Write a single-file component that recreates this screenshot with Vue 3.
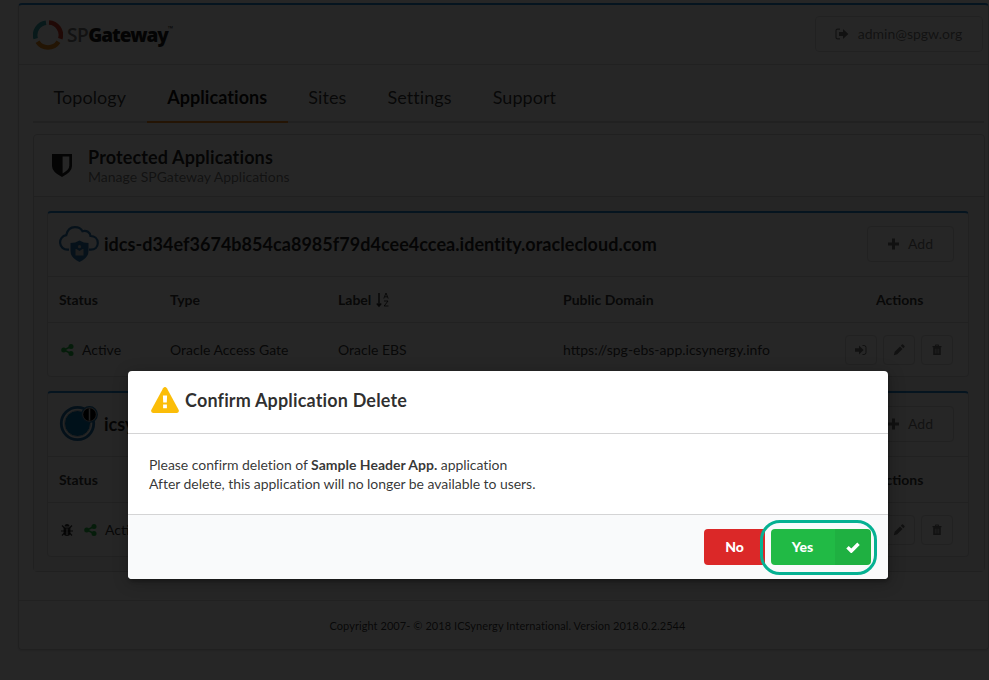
<script setup>
const tabs = ['Topology', 'Applications', 'Sites', 'Settings', 'Support']
const providers = [
  { kind: 'cloud', title: 'idcs-d34ef3674b854ca8985f79d4cee4ccea.identity.oraclecloud.com', debug: false, heads: ['Type', 'Label', 'Public Domain'], cells: ['Oracle Access Gate', 'Oracle EBS', 'https://spg-ebs-app.icsynergy.info'] },
  { kind: 'ring', title: 'icsy', debug: true, heads: ['', '', ''], cells: ['', '', ''] }
]
</script>

<template>
  <div class="page">
    <div class="shell">
      <header class="top">
        <div class="brand">
          <svg class="logo" width="30" height="30" viewBox="0 0 30 30" fill="none" stroke-width="4.600">
            <path d="M2.700 18.700A12.500 12.500 0 0 1 13 2.700" stroke="#35a6ad" />
            <path d="M16 2.500A12.500 12.500 0 0 1 27.300 18.700" stroke="#d8402a" />
            <path d="M4.500 21.800A12.500 12.500 0 0 0 25.500 21.800" stroke="#e78a1e" />
          </svg>
          <span class="wordmark"><span class="sp">SP</span><b>Gateway</b><span class="tm">™</span></span>
        </div>
        <button class="btn user">
          <svg width="14" height="12" viewBox="0 0 14 12"><path d="M5 1.200H2.600Q1 1.200 1 2.800v6.400q0 1.600 1.600 1.600H5" fill="none" stroke="currentColor" stroke-width="1.200" /><path d="M4 4h4V1l5.400 5L8 11V8H4z" fill="currentColor" /></svg>
          <span>admin@spgw.org</span>
        </button>
      </header>

      <nav class="tabs">
        <a v-for="t in tabs" :key="t" :class="['tab', { active: t === 'Applications' }]">{{ t }}</a>
      </nav>

      <section class="panel">
        <div class="panel-head">
          <svg class="shield" width="20" height="24" viewBox="0 0 20 24"><path d="M0 1h20v12q0 6-10 11Q0 19 0 13z" fill="#1b1c1d" /><path d="M10.600 3.600h6.700v9q0 4.300-6.700 8z" fill="#fff" /></svg>
          <div class="panel-text">
            <div class="panel-title">Protected Applications</div>
            <div class="panel-sub">Manage SPGateway Applications</div>
          </div>
        </div>
        <div class="panel-body">
          <article v-for="p in providers" :key="p.kind" class="card">
            <div class="card-head">
              <svg v-if="p.kind === 'cloud'" width="40" height="36" viewBox="0 0 40 36">
                <path d="M10 23.700H8.500A7.300 7.300 0 0 1 7.200 9.200C8.500 3 12 1.100 16 1.100c4 0 6.500 2.100 7.500 4.100 4-1.300 7.700 1.300 8 4.800 4 0 7.300 2.500 7.300 7.100 0 4-3 6.600-7 6.600H30" fill="none" stroke="#2874ac" stroke-width="2.200" />
                <path d="M20.500 14.500q4 2.500 9 2.500v8q0 7-9 11-9-4-9-11v-8q5 0 9-2.500z" fill="#2874ac" />
                <path d="M16.500 23h1l3 2 3-2h1v6.500h-8z" fill="#ccc" /><circle cx="20.500" cy="20.700" r="1.600" fill="#ccc" />
              </svg>
              <svg v-else width="40" height="36" viewBox="0 0 40 36" overflow="visible">
                <circle cx="18.500" cy="17.500" r="16.200" fill="none" stroke="#1b6fa8" stroke-width="2.800" />
                <circle cx="18.500" cy="17.500" r="13" fill="#0672ae" stroke="#ccc" stroke-width="1" />
                <circle cx="30.500" cy="8.500" r="7.800" fill="#bbb" stroke="#1b6fa8" stroke-width="1.200" />
                <circle cx="30.500" cy="8.500" r="6.300" fill="#000" /><path d="M30.500 2.500v12" stroke="#ddd" stroke-width="1.500" />
              </svg>
              <h2>{{ p.title }}</h2>
              <button class="btn add">
                <svg width="11" height="12" viewBox="0 0 11 12"><path d="M5.500 .5v11M0 6h11" stroke="currentColor" stroke-width="3" /></svg>
                <span>Add</span>
              </button>
            </div>
            <div class="row heads">
              <div>Status</div>
              <div v-for="(h, i) in p.heads" :key="i" class="sort">{{ h }}
                <svg v-if="h === 'Label'" width="14" height="16" viewBox="0 0 14 16" fill="none" stroke="currentColor"><path d="M3 1v12M.8 11.500L3 14l2.200-2.500" stroke-width="1.500" /><path d="M7.800 6.500L10 1l2.200 5.500M8.800 4.800h2.400M8 9h4l-3.800 5h4.300" stroke-width=".9" /></svg>
              </div>
              <div class="acts-title">Actions</div>
            </div>
            <div class="row data">
              <div class="status">
                <svg v-if="p.debug" class="bug" width="12" height="14" viewBox="0 0 12 14"><path d="M3.500 3.500a2.500 2.500 0 0 1 5 0z" fill="currentColor" /><path d="M2.600 4.500h6.800v5Q9.400 13 6 13t-3.400-3.500z" fill="currentColor" /><path d="M0 8h12M1 2.500L3.500 5M11 2.500L8.500 5M1 12.500L3.500 10M11 12.500L8.500 10" stroke="currentColor" stroke-width="1.200" /><path d="M6 5.500v6.500" stroke="#fff" /></svg>
                <svg class="share" width="13" height="12" viewBox="0 0 13 12"><path d="M10 2.500L3 6l7 3.500" fill="none" stroke="currentColor" stroke-width="1.500" /><circle cx="10" cy="2.500" r="2.500" fill="currentColor" /><circle cx="2.700" cy="6" r="2.500" fill="currentColor" /><circle cx="10" cy="9.500" r="2.500" fill="currentColor" /></svg>
                <span>Active</span>
              </div>
              <div v-for="(c, i) in p.cells" :key="i">{{ c }}</div>
              <div class="acts">
                <button class="btn sq"><svg width="12" height="12" viewBox="0 0 12 12"><path d="M7.500 1.500H9q2 0 2 2v5q0 2-2 2H7.500" fill="none" stroke="currentColor" /><path d="M0 4.300h4V1.500L8.600 6 4 10.500V7.700H0z" fill="currentColor" /></svg></button>
                <button class="btn sq"><svg width="12" height="12" viewBox="0 0 12 12"><path d="M.8 11.200l.9-3.400L7 2.500 9.500 5l-5.300 5.300zM7.800 1.700L9 .5q.5-.4 1 0L11.500 2q.4.500 0 1l-1.200 1.200z" fill="currentColor" /></svg></button>
                <button class="btn sq"><svg width="10" height="12" viewBox="0 0 10 12"><path d="M.5 2.600h9M3.300 2.500l.5-1.500h2.400l.5 1.500" fill="none" stroke="currentColor" stroke-width="1.200" /><path d="M1.200 3.200h7.600V11H1.200z" fill="currentColor" /><path d="M3.300 4.700v4.800M5 4.700v4.800M6.700 4.700v4.800" stroke="#fff" stroke-width=".6" /></svg></button>
              </div>
            </div>
          </article>
        </div>
      </section>
      <footer>Copyright 2007- © 2018 ICSynergy International. Version 2018.0.2.2544</footer>
    </div>

    <div class="dimmer">
      <div class="modal" role="dialog">
        <div class="modal-head">
          <svg width="28" height="26" viewBox="0 0 28 26"><path d="M12.100 1.200q1.900-2.300 3.800 0L27.700 23q.8 2.500-1.700 3H2q-2.500-.5-1.700-3z" fill="#fbbd08" /><path d="M11.900 8.500h4.200l-.3 7h-3.600zM12.100 17.500h3.800v3.700h-3.800z" fill="#fff" /></svg>
          <span>Confirm Application Delete</span>
        </div>
        <div class="modal-body">
          <div>Please confirm deletion of <b>Sample Header App.</b> application</div>
          <div>After delete, this application will no longer be available to users.</div>
        </div>
        <div class="modal-actions">
          <button class="no">No</button>
          <button class="yes"><span class="yes-label">Yes</span><span class="tick"><svg width="14" height="11" viewBox="0 0 14 11"><path d="M1.500 5.200L5.300 9 12.500 1.800" fill="none" stroke="currentColor" stroke-width="3.500" /></svg></span></button>
          <div class="ring"></div>
        </div>
      </div>
    </div>
  </div>
</template>

<style>
body { margin: 0; background: #fff; }
</style>

<style scoped>
* { box-sizing: border-box; }
.page { position: relative; width: 989px; height: 680px; overflow: hidden; padding: 3px 1px 0 18px; font: 14px/20px Lato, sans-serif; color: rgba(0, 0, 0, .8); }
button { font: inherit; margin: 0; }
svg { display: block; flex: none; }
.shell { width: 971px; height: 647px; border: 1px solid #d4d4d5; border-top: 2px solid #2185d0; border-radius: 4px; box-shadow: 0 1px 2px rgba(34, 36, 38, .15); }
.top { height: 60px; border-bottom: 1px solid #dededf; display: flex; align-items: center; justify-content: space-between; padding: 0 5px 2px 14px; }
.brand { display: flex; align-items: center; gap: 4px; padding-top: 2px; }
.wordmark { display: flex; font: 19px/24px "Open Sans", sans-serif; letter-spacing: -.400px; color: #1b1c1d; }
.sp { color: #777; font-weight: 600; }
.wordmark b { font-weight: 800; letter-spacing: -1.100px; }
.tm { font-size: 7px; line-height: 12px; }
.btn { display: flex; align-items: center; justify-content: center; background: transparent; border: 1px solid #dededf; border-radius: 4px; color: rgba(0, 0, 0, .55); padding: 0; }
.user { width: 168px; height: 36px; gap: 9px; padding-right: 1px; }
.tabs { margin: 9px 4px 0 14px; height: 49px; border-bottom: 2px solid #dededf; display: flex; }
.tab { height: 49px; padding: 13px 20.570px 0; font-size: 18px; line-height: 20px; letter-spacing: .060px; border-bottom: 2px solid transparent; }
.tab.active { font-weight: 700; border-color: #f2851c; color: rgba(0, 0, 0, .95); }
.panel { margin: 11px 3px 0 14px; height: 438px; border: 1px solid #d4d4d5; border-radius: 4px; }
.panel-head { height: 62px; border-bottom: 1px solid #d4d4d5; display: flex; align-items: center; gap: 16px; padding-left: 18px; }
.shield { margin-bottom: 2px; }
.panel-text { padding-top: 2px; }
.panel-title { font-size: 18px; font-weight: 700; line-height: 20px; padding-bottom: 1px; letter-spacing: .130px; color: rgba(0, 0, 0, .87); }
.panel-sub { line-height: 18px; color: rgba(0, 0, 0, .55); }
.panel-body { background: #f8f8f9; padding: 14px 13px; height: 374px; display: grid; gap: 14px; align-content: start; }
.card { height: 166px; width: 922px; border: 1px solid #dededf; border-top: 2px solid #2185d0; border-radius: 4px; background: #fafafa; }
.card-head { height: 64px; border-bottom: 1px solid #dededf; display: flex; align-items: center; padding: 0 14px 2px 11px; }
h2 { font-size: 18px; line-height: 24px; font-weight: 700; letter-spacing: .035px; margin: 0 auto 0 5px; color: rgba(0, 0, 0, .87); }
.add { width: 87px; height: 36px; gap: 9px; }
.row { display: grid; grid-template-columns: 111px 168px 225px 278px 1fr; padding: 0 15px 0 11px; align-items: center; }
.heads { height: 46px; border-bottom: 1px solid #dededf; font-weight: 700; }
.data { height: 53px; }
.sort { display: flex; gap: 5px; align-items: center; }
.acts-title { padding-left: 35px; }
.status { display: flex; align-items: center; padding-left: 2px; }
.bug { margin-right: 11px; }
.share { color: #21ba45; margin-right: 8px; }
.acts { display: flex; gap: 6px; justify-content: flex-end; }
.sq { width: 32px; height: 30px; }
footer { margin-top: 28px; border-top: 1px solid #dededf; height: 50px; padding: 15px 0 0 8px; text-align: center; font-size: 11px; letter-spacing: .065px; }
.dimmer { position: absolute; inset: 0; background: rgba(0, 0, 0, .85); display: flex; justify-content: center; align-items: flex-start; padding: 371px 0 0 27px; }
.modal { width: 760px; height: 208px; background: #fff; border-radius: 4px; overflow: hidden; box-shadow: 1px 3px 3px rgba(0, 0, 0, .2), 1px 3px 15px 2px rgba(0, 0, 0, .2); }
.modal-head { height: 63px; border-bottom: 1px solid #d4d4d5; display: flex; align-items: center; gap: 6px; padding: 0 0 4px 23px; font-size: 18px; font-weight: 700; letter-spacing: .160px; color: rgba(0, 0, 0, .82); }
.modal-body { height: 80px; padding: 21px 21px 0; line-height: 19px; letter-spacing: -.045px; color: rgba(0, 0, 0, .8); }
.modal-body b { letter-spacing: 0; }
.modal-actions { position: relative; height: 65px; background: #f9fafb; border-top: 1px solid #d4d4d5; padding: 14px 17px 0; display: flex; justify-content: flex-end; gap: 6px; }
.no, .yes { height: 36px; border: 0; color: #fff; font-weight: 900; padding: 0; }
.no { width: 61px; background: #db2828; border-radius: 4px 0 0 4px; }
.yes { width: 100px; background: #21ba45; border-radius: 4px; display: flex; overflow: hidden; }
.yes-label { width: 63px; line-height: 36px; margin-right: 1px; }
.tick { flex: 1; height: 36px; background: rgba(0, 0, 0, .05); display: flex; align-items: center; justify-content: center; }
.ring { position: absolute; right: 11px; top: 5px; width: 117px; height: 55px; border: 3px solid #05b192; border-radius: 20px; }
</style>
